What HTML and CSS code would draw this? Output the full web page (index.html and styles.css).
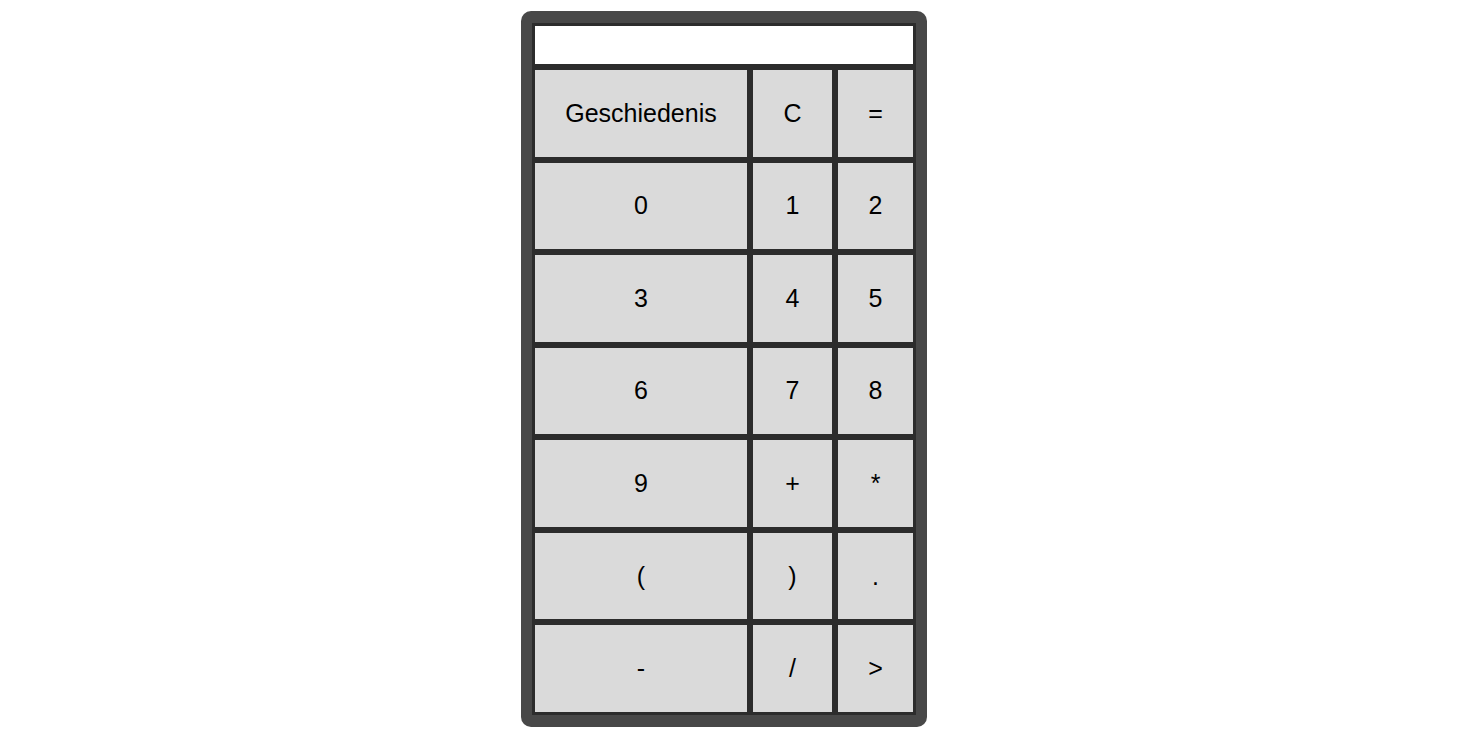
FILE: index.html
```html
<!DOCTYPE html>
<html>
<head>
<meta charset="utf-8">
<link rel="stylesheet" href="styles.css">
</head>
<body>
<div class="page">
  <div class="calc">
    <input class="display" type="text">
    <div class="keys">
      <button class="key">Geschiedenis</button>
      <button class="key">C</button>
      <button class="key">=</button>
      <button class="key">0</button>
      <button class="key">1</button>
      <button class="key">2</button>
      <button class="key">3</button>
      <button class="key">4</button>
      <button class="key">5</button>
      <button class="key">6</button>
      <button class="key">7</button>
      <button class="key">8</button>
      <button class="key">9</button>
      <button class="key">+</button>
      <button class="key">*</button>
      <button class="key">(</button>
      <button class="key">)</button>
      <button class="key">.</button>
      <button class="key">-</button>
      <button class="key">/</button>
      <button class="key">&gt;</button>
    </div>
  </div>
</div>
</body>
</html>
```
FILE: styles.css
```css
html, body {
  margin: 0;
  padding: 0;
  background: #ffffff;
}
.page {
  padding-top: 11px;
  padding-left: 521px;
}
.calc {
  width: 384px;
  height: 692px;
  padding: 12px 11px;
  background: #484848;
  border-radius: 10px;
  display: flex;
  flex-direction: column;
}
.display {
  box-sizing: border-box;
  width: 384px;
  height: 44px;
  margin: 0;
  padding: 0 6px;
  border: 3px solid #2c2c2c;
  background: #ffffff;
  font-family: "Liberation Sans", Arial, sans-serif;
  font-size: 25px;
  outline: none;
}
.keys {
  display: grid;
  grid-template-columns: 218px 85px 81px;
  grid-template-rows: repeat(7, 1fr);
  height: 648px;
}
.key {
  box-sizing: border-box;
  margin: 0;
  padding: 0;
  border: 3px solid #2c2c2c;
  background: #dadada;
  color: #000000;
  font-family: "Liberation Sans", Arial, sans-serif;
  font-size: 25px;
  display: flex;
  align-items: center;
  justify-content: center;
}
```
